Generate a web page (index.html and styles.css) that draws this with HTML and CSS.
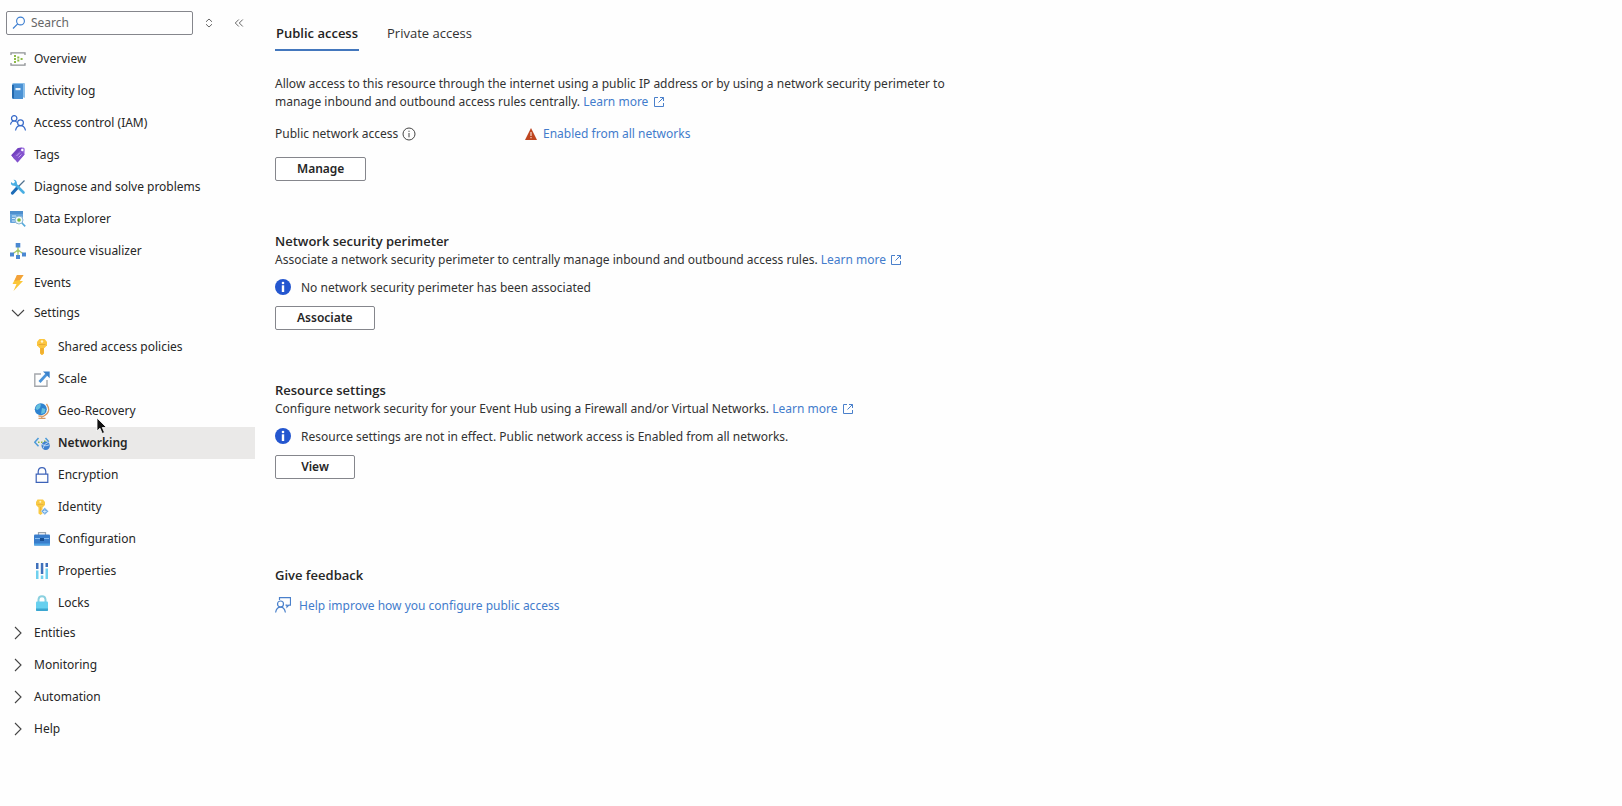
FILE: index.html
```html
<!DOCTYPE html>
<html lang="en">
<head>
    <meta charset="UTF-8">
    <meta name="viewport" content="width=device-width, initial-scale=1.0">
    <title>Event Hubs - Networking</title>
    <link rel="stylesheet" href="styles.css">
</head>
<body>

<!-- Shared shapes -->
<svg class="defs" aria-hidden="true">
    <symbol id="chevron" viewBox="0 0 16 16">
        <path d="M5 2 11 8l-6 6" fill="none" stroke="#444" stroke-width="1.100"/>
    </symbol>
    <symbol id="external" viewBox="0 0 12 12">
        <path d="M5 1.500H1.500v9h9V7M7 1.500h3.500V5M10.500 1.500 5.500 6.500" fill="none" stroke="#4a80cb"/>
    </symbol>
    <symbol id="info" viewBox="0 0 16 16">
        <circle cx="8" cy="8" r="8" fill="#2456cf"/>
        <circle cx="8" cy="4" r="1.300" fill="#fff"/>
        <path d="M6.800 6.300h2.400v6.700H6.800z" fill="#fff"/>
    </symbol>
</svg>

<div class="layout">
    <aside class="sidebar">
        <div class="toolbar">
            <div class="search">
                <svg class="search-icon" viewBox="0 0 14 14"><circle cx="8.500" cy="5" r="3.900" fill="none" stroke="#3b7dd0" stroke-width="1.100"/><path d="M5.700 7.800 1 12.500" stroke="#3b7dd0" stroke-width="1.200"/></svg>
                <input type="text" placeholder="Search" aria-label="Search">
            </div>
            <button class="tool" aria-label="Expand all"><svg class="icon-sm" viewBox="0 0 12 12"><path d="M3 4.800 6 2l3 2.800M3 7.200 6 10l3-2.800" fill="none" stroke="#666"/></svg></button>
            <button class="tool" aria-label="Collapse menu"><svg class="icon-sm" viewBox="0 0 12 12"><path d="M5.800 2.500 2.300 6l3.500 3.500M9.800 2.500 6.300 6l3.500 3.500" fill="none" stroke="#666"/></svg></button>
        </div>

        <nav class="menu">
            <a class="item" href="#">
                <svg class="icon" viewBox="0 0 16 16"><path d="M1 4V1.800h14V4M1 12v2.200h14V12" fill="none" stroke="#8f9295" stroke-width="1.300"/><g fill="#8cba45"><path d="M4 4h2v2H4zM4 7h2v2H4zM4 10h2v2H4zM7.300 5.500h2v2h-2zM7.300 8.600h2v2h-2zM10.600 7h2v2h-2z"/></g></svg>
                Overview
            </a>
            <a class="item" href="#">
                <svg class="icon" viewBox="0 0 16 16"><path d="M2 1.500Q2 0 3.500 0H14q1 0 1 1v13q0 1-1 1z" fill="#8dc0ea"/><path d="M3.500 1H13v15H3.500Q2 16 2 14.500v-12Q2 1 3.500 1z" fill="#4b92d4"/><path d="M2 2h2v13.500Q2 15.500 2 14z" fill="#2469ad"/><path d="M5.500 5h5v2.200h-5z" fill="#e9f3fb"/></svg>
                Activity log
            </a>
            <a class="item" href="#">
                <svg class="icon" viewBox="0 0 16 16"><g fill="none" stroke="#3568c8" stroke-width="1.200"><circle cx="4.200" cy="3.300" r="2.700"/><path d="M.5 9.500q.8-3.500 3.700-3.500 1.800 0 2.800 1.300"/><circle cx="10.500" cy="7.800" r="2.900"/><path d="M5.500 15.500q1-4.800 5-4.800t5 4.800"/></g></svg>
                Access control (IAM)
            </a>
            <a class="item" href="#">
                <svg class="icon" viewBox="0 0 16 16"><path d="M1.300 8.200 7.700 1.300 13 .5Q14.500.5 14.700 2l-.2 5.500-7 8z" fill="#9a6be0"/><path d="M1.300 8.200 8 1l4-.4-7.500 12z" fill="#7342bf"/><path d="m7.500 15.500-5-6 9-7 3 5z" fill="#8251cc"/><path d="m6.500 9 3.500-3.500M8.500 10.500l3-3" stroke="#c4a5f0"/><circle cx="12.300" cy="3" r="1.200" fill="#fff"/></svg>
                Tags
            </a>
            <a class="item" href="#">
                <svg class="icon" viewBox="0 0 16 16"><path d="M14.500 1.500 9 7" stroke="#50718e" stroke-width="1.300"/><path d="m8 8-5.500 6" stroke="#1e6db8" stroke-width="3.200" stroke-linecap="round"/><path d="m5 5 8.500 8.500" stroke="#49aee2" stroke-width="2.600" stroke-linecap="round"/><path d="M3.500.8 5 2.500 4.500 4 3 4.500 1 3Q.3 7 4.500 6.800L7 5.500Q7 .5 3.500.8z" fill="#49aee2"/></svg>
                Diagnose and solve problems
            </a>
            <a class="item" href="#">
                <svg class="icon" viewBox="0 0 16 16"><rect x="0" y="0" width="13" height="12" rx="1" fill="#65a4dd"/><path d="M0 0h13v3H0z" fill="#4f8fcd"/><path d="M2 5h4M2 7.500h3M2 10h3" stroke="#d5e9f9"/><circle cx="9" cy="9" r="4" fill="#edf8fa" stroke="#8db6d2"/><circle cx="9" cy="9" r="1.800" fill="#7bb83c"/><path d="m12 12 3.200 3.300" stroke="#54a9db" stroke-width="1.700"/></svg>
                Data Explorer
            </a>
            <a class="item" href="#">
                <svg class="icon" viewBox="0 0 16 16"><path d="M8 4v9M8 7 2.500 11M8 7l5.500 4" fill="none" stroke="#a6c86a" stroke-width="1.300"/><g fill="#4a88d2"><path d="M5.700 0h4.600v4.500H5.700zM0 9.500h4v4H0zM12 9.500h4v4h-4zM6 12h4v4H6z"/></g><circle cx="8" cy="8" r="1.400" fill="#a6c86a"/></svg>
                Resource visualizer
            </a>
            <a class="item" href="#">
                <svg class="icon" viewBox="0 0 16 16"><path d="M7 0h6.500L9.800 6H13L3.500 16l3-7H2.500z" fill="#fac638"/><path d="M7 0h6.500L9.800 5 4.500 6z" fill="#f3a13b"/></svg>
                Events
            </a>

            <a class="item group" href="#"><svg class="icon open"><use href="#chevron"/></svg>Settings</a>
            <a class="item sub" href="#">
                <svg class="icon" viewBox="0 0 16 16"><path d="M6 8h4v6.500L8 16.300 6 14.500z" fill="#f5b52f"/><path d="M5.500 0h5L13 2.800v3.400L10.500 9h-5L3 6.200V2.800z" fill="#fbc640"/><circle cx="8" cy="2.500" r="1.200" fill="#fff4cf"/><path d="M4.500 5.500h7M8 9v5" stroke="#e8a935"/></svg>
                Shared access policies
            </a>
            <a class="item sub" href="#">
                <svg class="icon" viewBox="0 0 16 16"><path d="M7 3H.8v12.200H13V9" fill="none" stroke="#a4a7ac" stroke-width="1.400"/><path d="m5.500 11 7-7.500" stroke="#4a93d9" stroke-width="2.700"/><path d="M9 .5h6.700v6.700z" fill="#3a82cc"/></svg>
                Scale
            </a>
            <a class="item sub" href="#">
                <svg class="icon" viewBox="0 0 16 16"><circle cx="6.800" cy="6.300" r="6" fill="#2f83d0"/><path d="M2.500 3Q5 0 7 1.500L6 5 3.500 7 1.500 6zM8 5l3.500 1-1 4L7 11z" fill="#65c1df"/><path d="M12.500.8q5.500 8-3 12.500l-5-.3M7.800 13.500v2M4.500 15.500h7" fill="none" stroke="#d69a65" stroke-width="1.300"/></svg>
                Geo-Recovery
                <svg class="pointer" viewBox="0 0 12 18" aria-hidden="true"><path d="M1 1v13l3-2.800L6.200 16.500l2.300-1L6.300 10.500h4.200z" fill="#111" stroke="#fff" stroke-width=".8"/></svg>
            </a>
            <a class="item sub current" href="#" aria-current="page">
                <svg class="icon" viewBox="0 0 16 16"><path d="M4.500 3 .8 7.300l3.700 4M11.500 3l3.300 3.800" fill="none" stroke="#4d9bd8" stroke-width="1.500"/><path d="M4 6.500h1.500V8H4zM7 6.500h1.500V8H7zM10 5.500h1.500V7H10z" fill="#8bba47"/><circle cx="11.700" cy="10.800" r="4.200" fill="#3e80cf"/><path d="M8 9.500q4 2.500 7.500.3M9 13.500q1-5 5-6" fill="none" stroke="#c4def5" stroke-width=".9"/></svg>
                Networking
            </a>
            <a class="item sub" href="#">
                <svg class="icon" viewBox="0 0 16 16"><path d="M2.200 7.200h11.600v8.200H2.200zM4.200 7V4.500Q4.500.6 8 .6t3.800 3.900V7" fill="none" stroke="#3c62b8" stroke-width="1.200"/></svg>
                Encryption
            </a>
            <a class="item sub" href="#">
                <svg class="icon" viewBox="0 0 16 16"><path d="M3.500.5H9l2 2.500v3L8.500 8.500v6L6.500 16l-2-1.500v-6L2 6V3z" fill="#f9ca45"/><path d="M3.500 5.500h6M6.500 8v5" stroke="#e9b540"/><circle cx="6.300" cy="2.700" r="1" fill="#fff2c4"/><path d="m10.800 8.500 3.800 3.800-3.800 3.700L7 12.300z" fill="#6aa8e3" stroke="#fefefe" stroke-width=".5"/><path d="M10.800 10.500v4M9 12.500h3.600" stroke="#dff0fc" stroke-width=".8"/></svg>
                Identity
            </a>
            <a class="item sub" href="#">
                <svg class="icon" viewBox="0 0 16 16"><path d="M4.500 4V1.700h7V4" fill="none" stroke="#9ba4ad" stroke-width="1.200"/><rect y="3.500" width="16" height="11" rx="1" fill="#397dcb"/><path d="M1 7.500h14" stroke="#86bdf0"/><path d="M0 12.500h16v2H0z" fill="#4fa5e4"/><path d="M6 7h4v3H6z" fill="#174e91"/></svg>
                Configuration
            </a>
            <a class="item sub" href="#">
                <svg class="icon" viewBox="0 0 16 16"><path d="M2 0h2.500v6H2zM6.800 0h2.500v11H6.800zM11.500 0H14v4h-2.500z" fill="#3f70bb"/><path d="M2 7.500h2.500V16H2zM6.800 12.500h2.500V16H6.800zM11.500 5.500H14V16h-2.500z" fill="#6fd0ee"/></svg>
                Properties
            </a>
            <a class="item sub" href="#">
                <svg class="icon" viewBox="0 0 16 16"><path d="M4.500 8V4.500Q4.700 1.200 8 1.200t3.500 3.300V8" fill="none" stroke="#8ad0df" stroke-width="2"/><rect x="2" y="6.500" width="12" height="9.500" rx="1" fill="#67d0ef"/><path d="M2 13.500h12V15q0 1-1 1H3q-1 0-1-1z" fill="#3ba6d0"/></svg>
                Locks
            </a>
            <a class="item group" href="#"><svg class="icon"><use href="#chevron"/></svg>Entities</a>
            <a class="item group" href="#"><svg class="icon"><use href="#chevron"/></svg>Monitoring</a>
            <a class="item group" href="#"><svg class="icon"><use href="#chevron"/></svg>Automation</a>
            <a class="item group" href="#"><svg class="icon"><use href="#chevron"/></svg>Help</a>
        </nav>
    </aside>

    <main class="content">
        <div class="tabs" role="tablist">
            <button class="tab active" role="tab" aria-selected="true">Public access</button>
            <button class="tab" role="tab" aria-selected="false">Private access</button>
        </div>

        <section class="section intro">
            <p>Allow access to this resource through the internet using a public IP address or by using a network security perimeter to manage inbound and outbound access rules centrally. <a href="#">Learn more <svg class="external"><use href="#external"/></svg></a></p>
            <div class="status">
                <span class="status-label">Public network access
                    <svg class="hint" viewBox="0 0 14 14"><circle cx="7" cy="7" r="6" fill="none" stroke="#444"/><path d="M7 6v4.300M7 3.700v1.200" stroke="#444"/></svg>
                </span>
                <svg class="warning" viewBox="0 0 12 12"><path d="M6 0 12 12H0z" fill="#bf4620"/><path d="M6 4v4M6 9v1.300" stroke="#f5d6ca" stroke-width="1.200"/></svg>
                <a href="#">Enabled from all networks</a>
            </div>
            <button class="btn">Manage</button>
        </section>

        <section class="section">
            <h2>Network security perimeter</h2>
            <p>Associate a network security perimeter to centrally manage inbound and outbound access rules. <a href="#">Learn more <svg class="external"><use href="#external"/></svg></a></p>
            <div class="note"><svg class="icon"><use href="#info"/></svg><span>No network security perimeter has been associated</span></div>
            <button class="btn">Associate</button>
        </section>

        <section class="section">
            <h2>Resource settings</h2>
            <p>Configure network security for your Event Hub using a Firewall and/or Virtual Networks. <a href="#">Learn more <svg class="external"><use href="#external"/></svg></a></p>
            <div class="note"><svg class="icon"><use href="#info"/></svg><span>Resource settings are not in effect. Public network access is Enabled from all networks.</span></div>
            <button class="btn">View</button>
        </section>

        <section class="section feedback">
            <h2>Give feedback</h2>
            <a class="feedback-link" href="#">
                <svg class="icon" viewBox="0 0 16 16"><g fill="none" stroke="#4a80cb" stroke-width="1.200"><path d="M4.500 3V.7h11v7.500h-1.700L12 10V8.200h-1.500"/><circle cx="5.500" cy="7" r="3"/><path d="M.6 15.500q.9-5.300 4.900-5.300t4.900 5.300"/></g></svg>
                <span>Help improve how you configure public access</span>
            </a>
        </section>
    </main>
</div>

</body>
</html>
```
FILE: styles.css
```css
body {
    margin: 0;
    background: #fefefe;
    color: #323232;
    font-family: "Noto Sans", "Open Sans", sans-serif;
    font-size: 12px;
    line-height: 18px;
}
.defs {
    display: none;
}
a {
    color: #437ccc;
    text-decoration: none;
}
button, input {
    font: inherit;
    color: inherit;
}
.layout {
    display: flex;
    min-height: 100vh;
}

/* Sidebar */
.sidebar {
    flex: none;
    width: 255px;
    box-sizing: border-box;
    padding-top: 11px;
}
.toolbar {
    display: flex;
    align-items: center;
    padding-left: 6px;
    margin-bottom: 8px;
}
.search {
    display: flex;
    align-items: center;
    gap: 5px;
    width: 187px;
    height: 24px;
    padding: 0 5px;
    box-sizing: border-box;
    border: 1px solid #85868c;
    border-radius: 2px;
}
.search-icon {
    flex: none;
    width: 14px;
    height: 14px;
}
.search input {
    width: 100%;
    min-width: 0;
    padding: 0;
    border: none;
    outline: none;
    background: transparent;
}
.search input::placeholder {
    color: #666;
    opacity: 1;
}
.tool {
    display: flex;
    padding: 4px;
    margin-left: 6px;
    border: none;
    background: none;
}
.tool + .tool {
    margin-left: 10px;
}
.icon-sm {
    width: 12px;
    height: 12px;
}
.icon {
    flex: none;
    width: 16px;
    height: 16px;
}
.item {
    position: relative;
    display: flex;
    align-items: center;
    gap: 8px;
    height: 32px;
    padding-left: 10px;
    box-sizing: border-box;
    color: #262626;
}
.group {
    padding-bottom: 4px;
}
.sub {
    padding-left: 34px;
}
.current {
    background: #eae9e8;
    font-weight: 600;
}
.open {
    transform: rotate(90deg);
}
.pointer {
    position: absolute;
    left: 96px;
    top: 22px;
    width: 12px;
    height: 18px;
    z-index: 1;
}

/* Content */
.content {
    flex: 1;
    padding: 16px 20px;
}
.tabs {
    display: flex;
    gap: 27px;
    margin-bottom: 24px;
}
.tab {
    height: 35px;
    padding: 0 1px;
    border: none;
    border-bottom: 2px solid transparent;
    background: none;
    font-family: "Open Sans", "Noto Sans", sans-serif;
    font-size: 13px;
}
.active {
    border-bottom-color: #4377bd;
    font-weight: 600;
    color: #222;
}
.section {
    max-width: 690px;
    margin-bottom: 50px;
}
.section p {
    margin: 0;
}
.section h2 {
    margin: 0;
    font-family: "Open Sans", "Noto Sans", sans-serif;
    font-size: 13px;
    font-weight: 600;
    line-height: 20px;
    color: #262626;
}
.external {
    width: 12px;
    height: 12px;
    margin-left: 1px;
    vertical-align: -2px;
}
.status {
    display: flex;
    align-items: center;
    margin: 14px 0;
}
.status-label {
    display: flex;
    align-items: center;
    gap: 4px;
    width: 250px;
}
.hint {
    width: 14px;
    height: 14px;
}
.warning {
    width: 12px;
    height: 12px;
    margin-right: 6px;
}
.note {
    display: flex;
    gap: 10px;
    margin: 10px 0 9px;
}
.btn {
    display: block;
    height: 24px;
    min-width: 80px;
    padding: 0 21px;
    border: 1px solid #85868c;
    border-radius: 2px;
    background: #fff;
    font-weight: 600;
    line-height: 20px;
    color: #262626;
}
.feedback {
    padding-top: 36px;
}
.feedback-link {
    display: flex;
    gap: 8px;
    margin-top: 12px;
}
```
